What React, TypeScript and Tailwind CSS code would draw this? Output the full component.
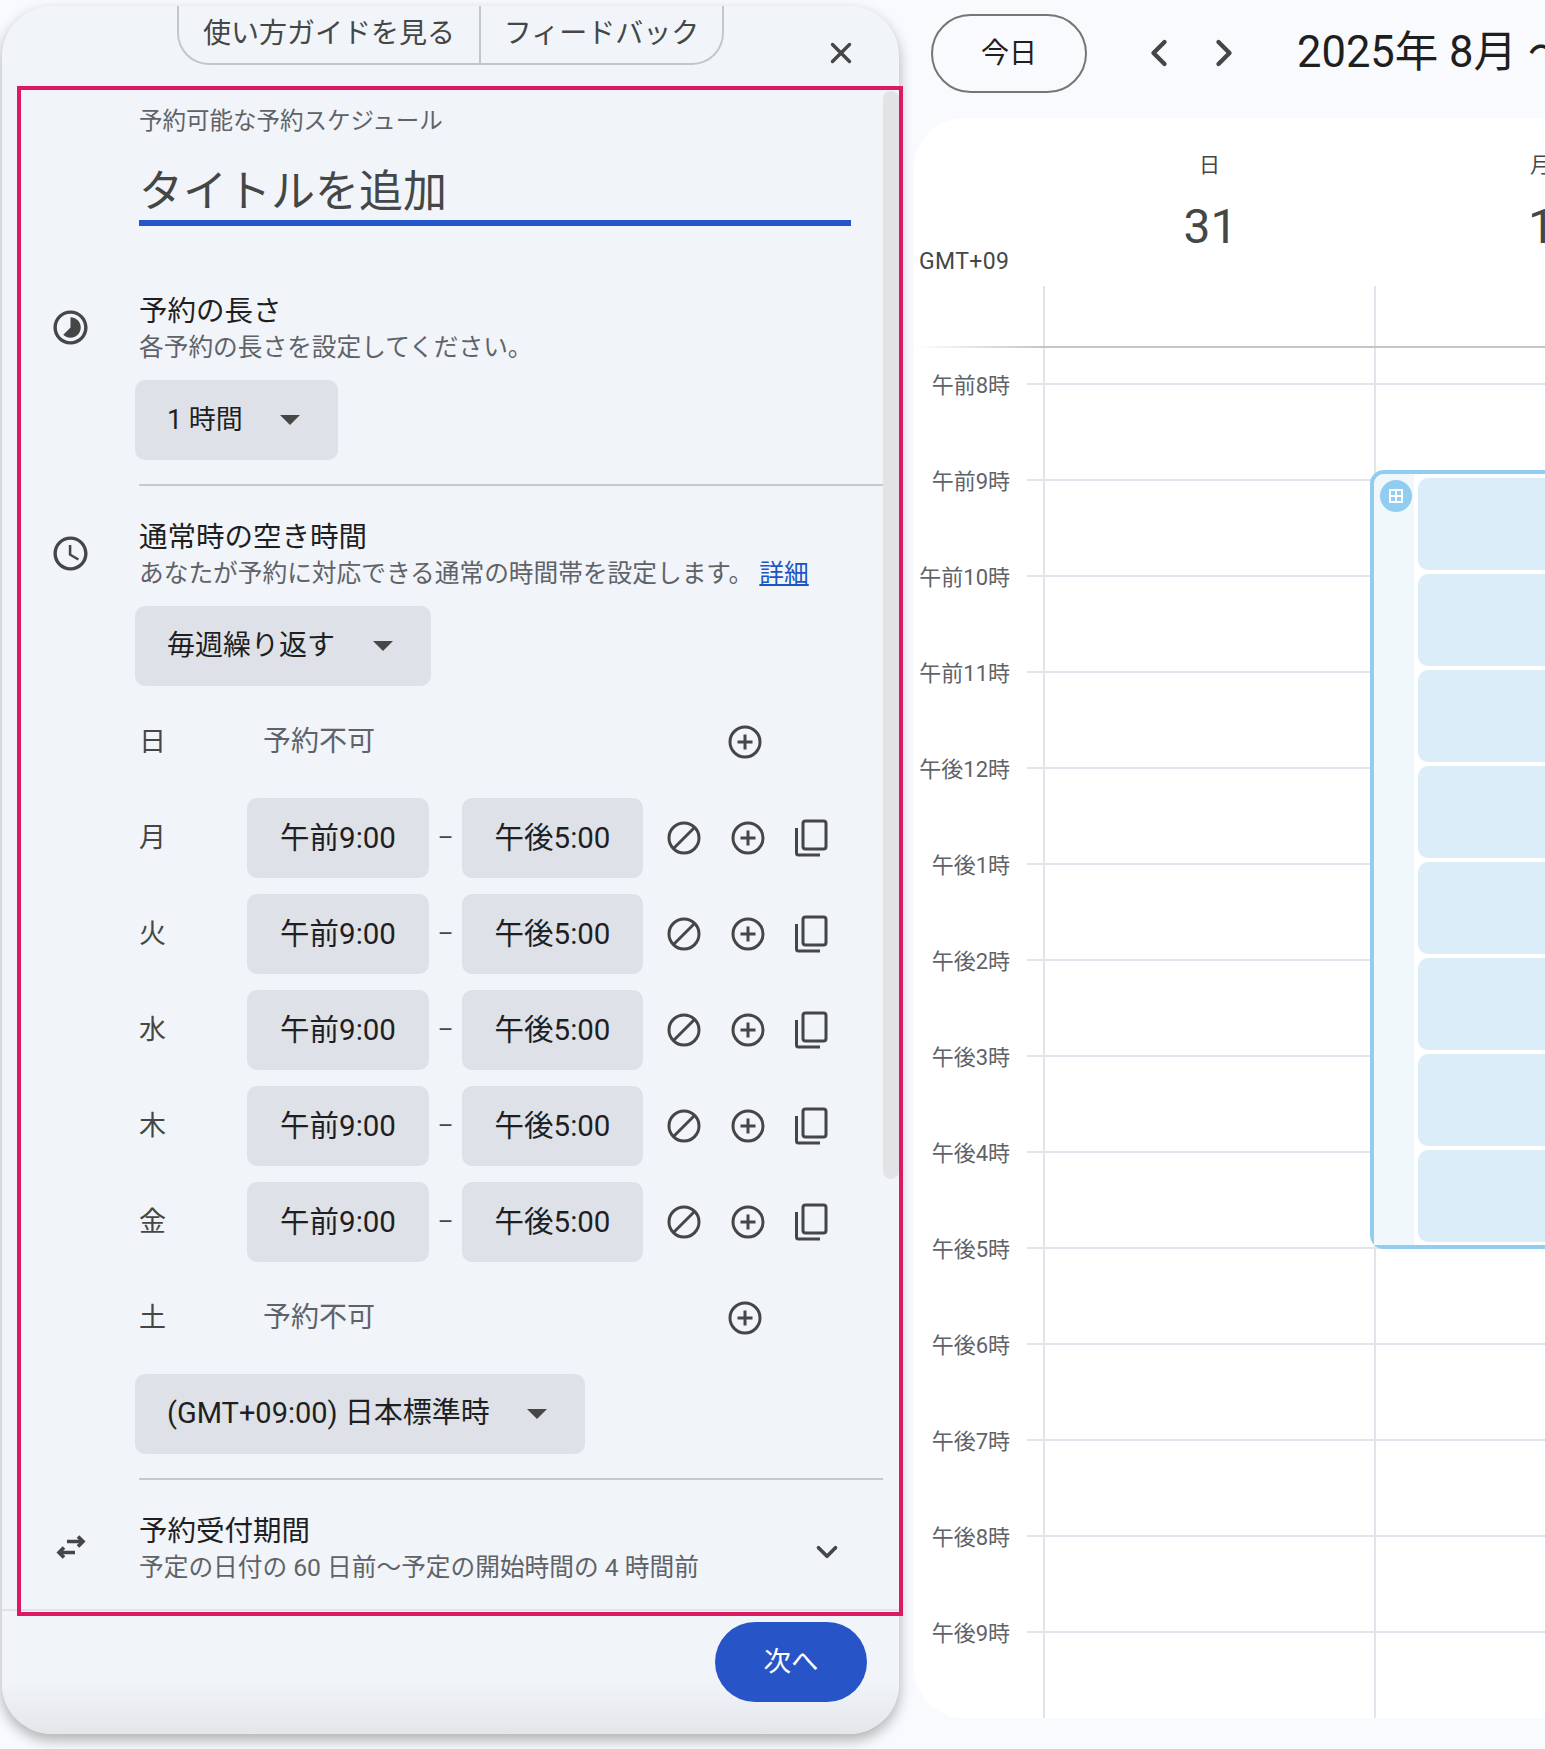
import React from 'react';
import { ChevronDown, ChevronLeft, ChevronRight, X } from 'lucide-react';

const hours = ['午前8時', '午前9時', '午前10時', '午前11時', '午後12時', '午後1時', '午後2時', '午後3時', '午後4時', '午後5時', '午後6時', '午後7時', '午後8時', '午後9時'];

const days = [
  { label: '日', open: false },
  { label: '月', open: true },
  { label: '火', open: true },
  { label: '水', open: true },
  { label: '木', open: true },
  { label: '金', open: true },
  { label: '土', open: false },
];

const Caret = () => (
  <svg viewBox="0 0 20 10" className="w-[20px] h-[10px] fill-[#444746]">
    <path d="M0 0h20L10 10z" />
  </svg>
);

const PlusCircle = () => (
  <svg viewBox="0 0 34 34" className="w-[34px] h-[34px] fill-none stroke-[#444746] stroke-[3]">
    <circle cx="17" cy="17" r="15" />
    <path d="M17 9.5v15M9.5 17h15" />
  </svg>
);

const BanIcon = () => (
  <svg viewBox="0 0 34 34" className="w-[34px] h-[34px] fill-none stroke-[#444746] stroke-[3]">
    <circle cx="17" cy="17" r="15" />
    <path d="M6.5 27.5 27.5 6.5" />
  </svg>
);

const CopyIcon = () => (
  <svg viewBox="0 0 34 38" className="w-[34px] h-[38px] fill-none stroke-[#444746] stroke-[3]">
    <rect x="9" y="2" width="23" height="28" rx="2.5" />
    <path d="M2.5 9v25a2 2 0 0 0 2 2H26" />
  </svg>
);

const DurationIcon = () => (
  <svg viewBox="0 0 24 24" className="w-[41px] h-[41px] fill-[#444746]">
    <path d="M16.24 7.76C15.07 6.59 13.54 6 12 6v6l-4.24 4.24c2.34 2.34 6.14 2.34 8.49 0 2.34-2.34 2.34-6.14-.01-8.48zM12 2C6.48 2 2 6.48 2 12s4.48 10 10 10 10-4.48 10-10S17.52 2 12 2zm0 18c-4.42 0-8-3.58-8-8s3.58-8 8-8 8 3.58 8 8-3.58 8-8 8z" />
  </svg>
);

const ClockIcon = () => (
  <svg viewBox="0 0 24 24" className="w-[41px] h-[41px] fill-[#444746]">
    <path d="M11.99 2C6.47 2 2 6.48 2 12s4.47 10 9.99 10C17.52 22 22 17.52 22 12S17.52 2 11.99 2zM12 20c-4.42 0-8-3.58-8-8s3.58-8 8-8 8 3.58 8 8-3.58 8-8 8zm.5-13H11v6l5.25 3.15.75-1.23-4.5-2.67z" />
  </svg>
);

const WindowIcon = () => (
  <div className="w-[41px] flex justify-center">
    <svg viewBox="0 0 30 26" className="w-[30px] h-[26px] fill-none stroke-[#444746] stroke-[3.6]">
      <path d="M11 7.5h16M22 2.5l5 5-5 5M19 18.5H3M8 13.5l-5 5 5 5" />
    </svg>
  </div>
);

const Select = ({ label, width, text = 'text-[28px]' }: { label: string; width: string; text?: string }) => (
  <div className={`${width} h-[80px] -ml-1 rounded-[10px] bg-[#dee1e7] flex items-center justify-between pl-[32px] pr-[38px] ${text} text-[#1f1f1f]`}>
    <span>{label}</span>
    <Caret />
  </div>
);

const SectionHead = ({ icon, title, sub }: { icon: React.ReactNode; title: string; sub: React.ReactNode }) => (
  <div className="flex items-center">
    <div className="w-[137px] pl-[48px] shrink-0">{icon}</div>
    <div>
      <div className="h-[38px] leading-[42px] text-[28.5px] text-[#1f1f1f]">{title}</div>
      <div className="h-[34px] leading-[38px] text-[24.7px] text-[#5f6368]">{sub}</div>
    </div>
  </div>
);

const DayRow = ({ label, open }: { label: string; open: boolean }) => (
  <div className="h-[96px] flex items-center">
    <div className="w-[108px] text-[27px] text-[#444746] shrink-0">{label}</div>
    {open ? (
      <>
        <div className="w-[182px] h-[80px] rounded-[10px] bg-[#dee1e7] flex items-center justify-center text-[29.5px] text-[#1f1f1f]">午前9:00</div>
        <div className="w-[33px] text-center text-[24px] text-[#444746]">–</div>
        <div className="w-[181px] h-[80px] rounded-[10px] bg-[#dee1e7] flex items-center justify-center text-[29.5px] text-[#1f1f1f]">午後5:00</div>
        <div className="w-[73px] flex justify-end pr-[15px]"><BanIcon /></div>
        <div className="w-[64px] flex justify-center"><PlusCircle /></div>
        <div className="w-[64px] flex justify-center pr-[2px]"><CopyIcon /></div>
      </>
    ) : (
      <>
        <div className="w-[466px] pl-[16px] text-[28px] text-[#5f6368]">予約不可</div>
        <div className="w-[64px] flex justify-center"><PlusCircle /></div>
      </>
    )}
  </div>
);

const Panel = () => (
  <div className="relative w-[897px] h-[1728px] mt-[6px] ml-[2px] shrink-0 rounded-[50px] bg-[#f1f4f9] shadow-[0_6px_14px_rgba(0,0,0,0.3)] flex flex-col z-10">
    <div className="h-[81px] shrink-0 flex items-start">
      <div className="ml-[175px] w-[547px] h-[59px] flex border-x-2 border-b-2 border-[#c4c7c5] rounded-b-[32px] text-[28px] text-[#444746]">
        <div className="w-[302px] flex items-center justify-center border-r-2 border-[#c4c7c5] pb-[2px]">使い方ガイドを見る</div>
        <div className="flex-1 flex items-center justify-center pb-[2px]">フィードバック</div>
      </div>
      <X className="ml-[100px] mt-[30px] w-[34px] h-[34px] text-[#444746]" strokeWidth={2.4} />
    </div>

    <div className="flex-1 min-h-0 flex overflow-hidden border-b-2 border-[#e2e3e5]">
      <div className="w-[881px] shrink-0">
        <div className="pl-[137px] pt-[19px]">
          <div className="h-[30px] leading-[30px] text-[23.5px] text-[#5f6368]">予約可能な予約スケジュール</div>
          <div className="mt-[25px] w-[712px] h-[65px] leading-[62px] border-b-[6px] border-[#2456c8] text-[44px] text-[#444746]">タイトルを追加</div>
        </div>

        <div className="mt-[65px]">
          <SectionHead icon={<DurationIcon />} title="予約の長さ" sub="各予約の長さを設定してください。" />
          <div className="pl-[137px] mt-[17px]"><Select label="1 時間" width="w-[203px]" text="text-[27px]" /></div>
          <div className="ml-[137px] mt-[24px] h-[2px] bg-[#c8c9c9]" />
        </div>

        <div className="mt-[31px]">
          <SectionHead
            icon={<ClockIcon />}
            title="通常時の空き時間"
            sub={<>あなたが予約に対応できる通常の時間帯を設定します。 <span className="text-[#1a56c4] underline">詳細</span></>}
          />
          <div className="pl-[137px] mt-[17px]"><Select label="毎週繰り返す" width="w-[296px]" /></div>
          <div className="pl-[137px] mt-[8px]">
            {days.map((d) => <DayRow key={d.label} label={d.label} open={d.open} />)}
          </div>
          <div className="pl-[137px] mt-[8px]"><Select label="(GMT+09:00) 日本標準時" width="w-[450px]" text="text-[29px]" /></div>
          <div className="ml-[137px] mt-[24px] h-[2px] bg-[#c8c9c9]" />
        </div>

        <div className="mt-[31px] flex items-center">
          <SectionHead icon={<WindowIcon />} title="予約受付期間" sub="予定の日付の 60 日前〜予定の開始時間の 4 時間前" />
          <ChevronDown className="ml-auto mr-[39px] mt-[10px] w-[34px] h-[34px] text-[#444746]" strokeWidth={2.6} />
        </div>
      </div>
      <div className="w-[16px] shrink-0">
        <div className="mt-[4px] h-[1088px] rounded-full bg-[#e2e3e5]" />
      </div>
    </div>

    <div className="h-[123px] shrink-0 rounded-b-[50px] bg-gradient-to-b from-[#f1f4f9] from-55% to-[#e4e6ea] pt-[11px] flex justify-end pr-[32px]">
      <div className="w-[152px] h-[80px] rounded-[40px] bg-[#2755c8] text-white text-[27.5px] flex items-center justify-center">次へ</div>
    </div>

    {/* annotation frame */}
    <div className="absolute left-[15px] top-[80px] w-[886px] h-[1530px] border-[4px] border-[#dc1a64] pointer-events-none" />
  </div>
);

const HourRow = ({ label, h = 'h-[96px]' }: { label?: string; h?: string }) => (
  <div className={`${h} flex shrink-0`}>
    <div className="w-[96px] shrink-0 text-right text-[22px] text-[#5f6368] leading-[30px] -translate-y-[12px]">{label}</div>
    <div className="w-[17px] shrink-0" />
    <div className={`w-[16px] shrink-0 ${label ? 'border-t-2 border-[#e1e4ea]' : ''}`} />
    <div className={`w-[331px] shrink-0 border-l-2 border-[#e1e4ea] ${label ? 'border-t-2' : ''}`} />
    <div className={`w-[331px] shrink-0 border-l-2 border-[#e1e4ea] ${label ? 'border-t-2' : ''}`} />
  </div>
);

const Calendar = () => (
  <div className="flex-1 min-w-0 overflow-hidden flex flex-col">
    <div className="h-[118px] shrink-0 pt-[14px] pl-[32px] flex items-start whitespace-nowrap">
      <div className="w-[156px] h-[79px] shrink-0 rounded-[40px] border-2 border-[#747775] flex items-center justify-center text-[28px] text-[#1f1f1f]">今日</div>
      <ChevronLeft className="shrink-0 ml-[50px] mt-[17px] w-[44px] h-[44px] text-[#444746]" strokeWidth={2.4} />
      <ChevronRight className="shrink-0 ml-[21px] mt-[17px] w-[44px] h-[44px] text-[#444746]" strokeWidth={2.4} />
      <div className="shrink-0 ml-[51px] mt-[9px] text-[43.5px] leading-[60px] text-[#1f1f1f]">2025年 8月 〜</div>
    </div>

    <div className="ml-[15px] h-[1600px] w-[800px] shrink-0 rounded-l-[50px] bg-white overflow-hidden relative">
      <div className="h-[168px] flex">
        <div className="w-[129px] shrink-0 pt-[131px] pl-[5px] text-[23px] tracking-[0.4px] leading-[26px] text-[#444746]">GMT+09</div>
        {[['日', '31'], ['月', '1']].map(([d, n]) => (
          <div key={n} className="w-[331px] shrink-0 pt-[32px] flex flex-col items-center">
            <div className="ml-[2px] text-[21px] leading-[30px] text-[#444746]">{d}</div>
            <div className="mt-[17px] ml-[4px] text-[48px] leading-[60px] text-[#444746]">{n}</div>
          </div>
        ))}
      </div>
      <div className="h-[60px] flex">
        <div className="w-[129px] shrink-0" />
        <div className="w-[331px] shrink-0 border-l-2 border-[#e1e4ea]" />
        <div className="w-[331px] shrink-0 border-l-2 border-[#e1e4ea]" />
      </div>
      <div className="h-[2px] bg-gradient-to-r from-transparent to-[#c4c7c5] to-[16%]" />
      <div className="relative">
        <div className="flex flex-col">
          <HourRow h="h-[35px]" />
          {hours.map((h) => <HourRow key={h} label={h} />)}
          <HourRow h="h-[100px]" />
        </div>
        {/* availability block on Monday */}
        <div className="absolute left-[456px] top-[122px] w-[400px] h-[779px] rounded-[14px] border-4 border-[#90cdf0] bg-white flex">
          <div className="relative w-[40px] shrink-0 rounded-tl-[10px] bg-[#f1f8fc]">
            <div className="absolute left-[6px] top-[6px] w-[32px] h-[32px] rounded-full bg-[#90cdf0] flex items-center justify-center">
              <svg viewBox="0 0 16 16" className="w-[16px] h-[16px]">
                <path d="M1 1h14v14H1z" fill="#fff" />
                <path d="M3 3h4v4H3zM9 3h4v4H9zM3 9h4v4H3zM9 9h4v4H9z" fill="#90cdf0" />
              </svg>
            </div>
          </div>
          <div className="flex-1 pl-[4px] pt-[4px] flex flex-col gap-[4px]">
            {[0, 1, 2, 3, 4, 5, 6, 7].map((i) => (
              <div key={i} className="h-[92px] shrink-0 rounded-l-[10px] bg-[#dcedfa]" />
            ))}
          </div>
        </div>
      </div>
    </div>
  </div>
);

export default function App() {
  return (
    <div className="w-[1545px] h-[1749px] overflow-hidden flex bg-[#f8fafd] font-['Roboto','Noto_Sans_CJK_JP',sans-serif]">
      <Panel />
      <Calendar />
    </div>
  );
}
